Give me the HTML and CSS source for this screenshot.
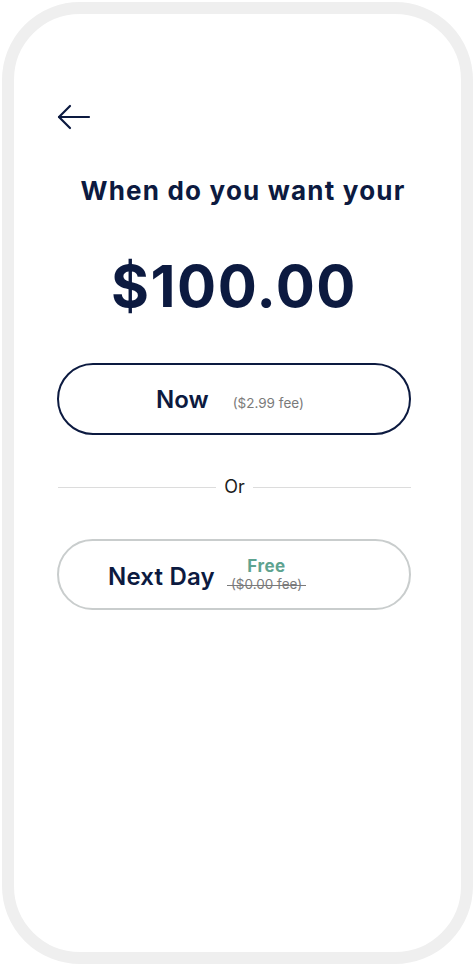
FILE: index.html
```html
<!DOCTYPE html>
<html lang="en">
<head>
<meta charset="UTF-8">
<meta name="viewport" content="width=device-width, initial-scale=1.0">
<title>Transfer Speed</title>
<link rel="stylesheet" href="styles.css">
</head>
<body>

<div class="phone">
    <div class="screen">
        <button class="backButton" aria-label="Back">
            <svg width="34" height="26" viewBox="0 0 34 26" fill="none" stroke="#0c1a40" stroke-width="2.2" stroke-linecap="round" stroke-linejoin="round">
                <path d="M32 13H2"/>
                <path d="M13 2L2 13l11 11"/>
            </svg>
        </button>

        <h1 class="question">When do you want your</h1>
        <div class="amount">$100.00</div>

        <button class="option option-now">
            <span class="optionLabel">Now</span>
            <span class="optionFee">($2.99 fee)</span>
        </button>

        <div class="divider">
            <span class="dividerLine"></span>
            <span class="dividerText">Or</span>
            <span class="dividerLine"></span>
        </div>

        <button class="option option-next">
            <span class="optionLabel">Next Day</span>
            <span class="feeStack">
                <span class="feeFree">Free</span>
                <span class="optionFee feeStruck">($0.00 fee)</span>
            </span>
        </button>
    </div>
</div>

</body>
</html>
```

FILE: styles.css
```css
body {
    margin: 0;
    background-color: #ffffff;
    font-family: 'Inter', 'Liberation Sans', sans-serif;
    color: #0c1a40;
}

.phone {
    box-sizing: border-box;
    width: 471px;
    height: 962px;
    margin: 2px 1px 2px 2px;
    border: 12px solid #efefef;
    border-radius: 78px;
    background-color: #ffffff;
}

.screen {
    padding: 0 50px 0 43px;
    display: flex;
    flex-direction: column;
}

.backButton {
    align-self: flex-start;
    margin-top: 90px;
    padding: 0;
    border: none;
    background: none;
    height: 26px;
    cursor: pointer;
}

.backButton svg {
    display: block;
}

.question {
    margin: 45px 0 0 18px;
    font-size: 26px;
    line-height: 32px;
    font-weight: 700;
    letter-spacing: 1.2px;
    text-align: center;
}

.amount {
    margin-top: 44px;
    font-size: 58px;
    line-height: 70px;
    font-weight: 700;
    letter-spacing: 1.5px;
    text-align: center;
}

.option {
    box-sizing: border-box;
    width: 354px;
    display: flex;
    align-items: center;
    background-color: #ffffff;
    border-radius: 36px;
    font-family: inherit;
    color: #0c1a40;
    cursor: pointer;
}

.option-now {
    margin-top: 42px;
    height: 72px;
    padding: 20px 0 0 97px;
    border: 2px solid #0c1a40;
    align-items: baseline;
}

.option-next {
    margin-top: 41px;
    height: 71px;
    padding: 0 0 0 49px;
    border: 2px solid #c9cdcd;
}

.optionLabel {
    font-size: 24px;
    font-weight: 600;
}

.option-now .optionLabel {
    margin-right: 24px;
}

.option-next .optionLabel {
    margin-right: 16px;
    margin-top: 4px;
    letter-spacing: 0.2px;
}

.optionFee {
    font-size: 13.5px;
    color: #7a7a7a;
}

.feeStack {
    display: flex;
    flex-direction: column;
    align-items: center;
    line-height: 18px;
}

.feeFree {
    font-size: 17px;
    font-weight: 700;
    letter-spacing: 0.5px;
    color: #5ea390;
}

.feeStruck {
    position: relative;
}

/* strike line runs a little past the text */
.feeStruck::after {
    content: '';
    position: absolute;
    left: -4px;
    right: -4px;
    top: 10px;
    height: 1px;
    background-color: #7a7a7a;
}

.divider {
    margin-top: 41px;
    display: flex;
    align-items: center;
    gap: 8px;
    padding-left: 1px;
}

.dividerLine {
    flex: 1;
    height: 1px;
    background-color: #dcdcdc;
}

.dividerText {
    font-size: 18px;
    line-height: 22px;
    color: #1d1d1d;
}
```
